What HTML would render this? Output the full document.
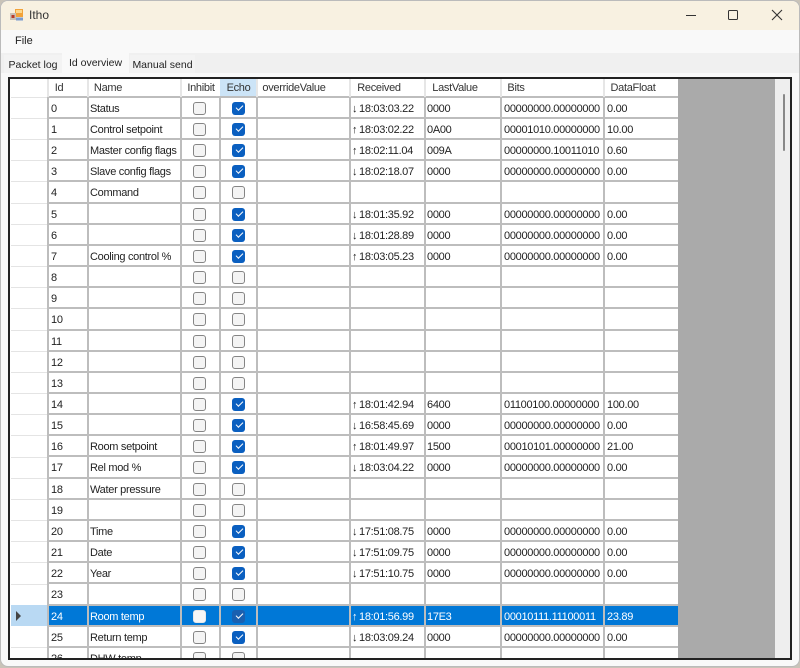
<!DOCTYPE html>
<html><head><meta charset="utf-8"><style>
html,body{margin:0;padding:0;width:800px;height:668px;overflow:hidden;background:#c9c3b8}
body{position:relative;font:11px/21px "Liberation Sans",sans-serif;letter-spacing:-.3px;color:#222}
#w{position:absolute;left:1px;top:1px;width:798px;height:665px;background:#f9f9f9;border-radius:7px;overflow:hidden;box-shadow:0 0 0 1px #bbb}
#t{position:absolute;left:0;top:0;width:798px;height:29px;background:#f8f1e1}
#m{position:absolute;left:0;top:29px;width:798px;height:23px;background:#f9f9f9}
#s{position:absolute;left:0;top:52px;width:798px;height:20px;background:#f0f0f0}
.a{position:absolute}
.tab{position:absolute;font-size:10.5px;letter-spacing:0;line-height:20px;text-align:center;background:#f3f3f3}
#g{position:absolute;left:8px;top:77px;width:784px;height:583px;box-sizing:border-box;border:2px solid #222;background:#aaa;overflow:hidden;filter:blur(.3px)}
#h{position:absolute;left:0;top:0;width:669px;height:18px;background:#fff}
#h b{position:absolute;top:0;font-weight:400;line-height:18px;text-align:center;color:#333;white-space:nowrap}
#d{position:absolute;left:0;top:18.84px;width:669px;background:#fff}
.r{position:relative;height:21.16px;box-sizing:border-box;border-bottom:2px solid #bdbdbd}
.r>*{position:absolute;top:1px;font-style:normal;font-weight:400;white-space:nowrap;line-height:21px}
.r>:nth-child(1){left:41px}.r>:nth-child(2){left:80px}
.r>:nth-child(3){left:183px;top:4px}.r>:nth-child(4){left:222px;top:4px}
.r>:nth-child(5){left:248px}.r>:nth-child(6){left:342px}.r>:nth-child(7){left:417px}.r>:nth-child(8){left:494px}.r>:nth-child(9){left:597px}
.r u{text-decoration:none;font-size:11px;display:inline-block;width:7px;letter-spacing:0}
.c{width:11px;height:11px;border:1.2px solid #858585;border-radius:3px;background:#f4f4f4}
.k{width:13px;height:13px;border:0;background:#0a5fc0}
.k:after{content:"";position:absolute;left:3.5px;top:3px;width:6px;height:3px;border-left:1.2px solid #fff;border-bottom:1.2px solid #fff;transform:rotate(-45deg)}
.sel{background:#0078d7;color:#fff}
.sel .c{background:#f6f6f6;border-color:#e8e8e8}
.sel .k{background:#1a60b0}
.v{position:absolute;top:18px;width:2px;height:563px;background:#bdbdbd}
.hv{position:absolute;top:0;width:2px;height:18px;background:#e6e6e6}
.rh{position:absolute;left:1px;width:36px;height:1px;background:#e4e4e4}
</style></head><body>
<div id="w">
<div id="t">
<svg class="a" style="left:9px;top:8px" width="14" height="13" viewBox="0 0 14 13"><rect x="5" y="0" width="8" height="8" fill="#f2a33a"/><rect x="6" y="1" width="6" height="3" fill="#fbd890"/><rect x="0" y="4" width="6" height="7" fill="#c9c0b5"/><rect x="1.5" y="6" width="3" height="3" fill="#b83a2a"/><rect x="6" y="8.500" width="7" height="3" fill="#7a9cd0"/></svg>
<div class="a" style="left:28px;top:4px;font-size:12px;letter-spacing:0;color:#333">Itho</div>
<div class="a" style="left:685px;top:13.500px;width:10px;height:1px;background:#333"></div>
<div class="a" style="left:727px;top:8.500px;width:8px;height:8px;border:1.2px solid #333;border-radius:1.5px"></div>
<svg class="a" style="left:770px;top:8px" width="12" height="12"><path d="M1 1L11 11M11 1L1 11" stroke="#333" stroke-width="1.1" fill="none"/></svg>
</div>
<div id="m"><div class="a" style="left:14px;top:1px;font-size:11px;letter-spacing:0;color:#222">File</div></div>
<div id="s">
<div class="tab" style="left:3px;top:2px;width:58px;height:18px">Packet log</div>
<div class="tab" style="left:61px;top:0;width:67px;height:20px;background:#f9f9f9">Id overview</div>
<div class="tab" style="left:129px;top:2px;width:65px;height:18px">Manual send</div>
</div>
</div>
<div id="g">
<div id="h">
<b style="left:38px;width:22px">Id</b>
<b style="left:78px;width:40px">Name</b>
<b style="left:172px;width:38px">Inhibit</b>
<b style="left:210px;width:37px;background:#cce4f7">Echo</b>
<b style="left:248px;width:72px">overrideValue</b>
<b style="left:340px;width:58px">Received</b>
<b style="left:415px;width:60px">LastValue</b>
<b style="left:492px;width:28px">Bits</b>
<b style="left:597px;width:52px">DataFloat</b>
</div>
<div id="d">
<div class="r"><b>0</b><b>Status</b><i class="c"></i><i class="c k"></i><b></b><b><u>↓</u>18:03:03.22</b><b>0000</b><b>00000000.00000000</b><b>0.00</b></div>
<div class="r"><b>1</b><b>Control setpoint</b><i class="c"></i><i class="c k"></i><b></b><b><u>↑</u>18:03:02.22</b><b>0A00</b><b>00001010.00000000</b><b>10.00</b></div>
<div class="r"><b>2</b><b>Master config flags</b><i class="c"></i><i class="c k"></i><b></b><b><u>↑</u>18:02:11.04</b><b>009A</b><b>00000000.10011010</b><b>0.60</b></div>
<div class="r"><b>3</b><b>Slave config flags</b><i class="c"></i><i class="c k"></i><b></b><b><u>↓</u>18:02:18.07</b><b>0000</b><b>00000000.00000000</b><b>0.00</b></div>
<div class="r"><b>4</b><b>Command</b><i class="c"></i><i class="c"></i></div>
<div class="r"><b>5</b><b></b><i class="c"></i><i class="c k"></i><b></b><b><u>↓</u>18:01:35.92</b><b>0000</b><b>00000000.00000000</b><b>0.00</b></div>
<div class="r"><b>6</b><b></b><i class="c"></i><i class="c k"></i><b></b><b><u>↓</u>18:01:28.89</b><b>0000</b><b>00000000.00000000</b><b>0.00</b></div>
<div class="r"><b>7</b><b>Cooling control %</b><i class="c"></i><i class="c k"></i><b></b><b><u>↑</u>18:03:05.23</b><b>0000</b><b>00000000.00000000</b><b>0.00</b></div>
<div class="r"><b>8</b><b></b><i class="c"></i><i class="c"></i></div>
<div class="r"><b>9</b><b></b><i class="c"></i><i class="c"></i></div>
<div class="r"><b>10</b><b></b><i class="c"></i><i class="c"></i></div>
<div class="r"><b>11</b><b></b><i class="c"></i><i class="c"></i></div>
<div class="r"><b>12</b><b></b><i class="c"></i><i class="c"></i></div>
<div class="r"><b>13</b><b></b><i class="c"></i><i class="c"></i></div>
<div class="r"><b>14</b><b></b><i class="c"></i><i class="c k"></i><b></b><b><u>↑</u>18:01:42.94</b><b>6400</b><b>01100100.00000000</b><b>100.00</b></div>
<div class="r"><b>15</b><b></b><i class="c"></i><i class="c k"></i><b></b><b><u>↓</u>16:58:45.69</b><b>0000</b><b>00000000.00000000</b><b>0.00</b></div>
<div class="r"><b>16</b><b>Room setpoint</b><i class="c"></i><i class="c k"></i><b></b><b><u>↑</u>18:01:49.97</b><b>1500</b><b>00010101.00000000</b><b>21.00</b></div>
<div class="r"><b>17</b><b>Rel mod %</b><i class="c"></i><i class="c k"></i><b></b><b><u>↓</u>18:03:04.22</b><b>0000</b><b>00000000.00000000</b><b>0.00</b></div>
<div class="r"><b>18</b><b>Water pressure</b><i class="c"></i><i class="c"></i></div>
<div class="r"><b>19</b><b></b><i class="c"></i><i class="c"></i></div>
<div class="r"><b>20</b><b>Time</b><i class="c"></i><i class="c k"></i><b></b><b><u>↓</u>17:51:08.75</b><b>0000</b><b>00000000.00000000</b><b>0.00</b></div>
<div class="r"><b>21</b><b>Date</b><i class="c"></i><i class="c k"></i><b></b><b><u>↓</u>17:51:09.75</b><b>0000</b><b>00000000.00000000</b><b>0.00</b></div>
<div class="r"><b>22</b><b>Year</b><i class="c"></i><i class="c k"></i><b></b><b><u>↓</u>17:51:10.75</b><b>0000</b><b>00000000.00000000</b><b>0.00</b></div>
<div class="r"><b>23</b><b></b><i class="c"></i><i class="c"></i></div>
<div class="r sel"><b>24</b><b>Room temp</b><i class="c"></i><i class="c k"></i><b></b><b><u>↑</u>18:01:56.99</b><b>17E3</b><b>00010111.11100011</b><b>23.89</b></div>
<div class="r"><b>25</b><b>Return temp</b><i class="c"></i><i class="c k"></i><b></b><b><u>↓</u>18:03:09.24</b><b>0000</b><b>00000000.00000000</b><b>0.00</b></div>
<div class="r"><b>26</b><b>DHW temp</b><i class="c"></i><i class="c"></i></div>
</div>
<div class="a" style="left:37px;top:17px;width:631px;height:2px;background:#bdbdbd"></div>
<div class="a" style="left:0;top:0;width:37px;height:581px;background:#fff"></div>
<div class="rh" style="top:18px"></div><div class="rh" style="top:39px"></div><div class="rh" style="top:60px"></div><div class="rh" style="top:81px"></div><div class="rh" style="top:102px"></div><div class="rh" style="top:124px"></div><div class="rh" style="top:145px"></div><div class="rh" style="top:166px"></div><div class="rh" style="top:187px"></div><div class="rh" style="top:208px"></div><div class="rh" style="top:229px"></div><div class="rh" style="top:251px"></div><div class="rh" style="top:272px"></div><div class="rh" style="top:293px"></div><div class="rh" style="top:314px"></div><div class="rh" style="top:335px"></div><div class="rh" style="top:356px"></div><div class="rh" style="top:378px"></div><div class="rh" style="top:399px"></div><div class="rh" style="top:420px"></div><div class="rh" style="top:441px"></div><div class="rh" style="top:462px"></div><div class="rh" style="top:483px"></div><div class="rh" style="top:505px"></div><div class="rh" style="top:568px"></div>
<div class="a" style="left:1px;top:526px;width:36px;height:21px;background:#b9d9f3"></div>
<svg class="a" style="left:5px;top:532px" width="7" height="10"><path d="M1 0L6 5L1 10Z" fill="#444"/></svg>
<div class="v" style="left:36.500px"></div><div class="v" style="left:76.500px"></div><div class="v" style="left:169.500px"></div><div class="v" style="left:208.500px"></div><div class="v" style="left:245.500px"></div><div class="v" style="left:338.500px"></div><div class="v" style="left:413.500px"></div><div class="v" style="left:489.500px"></div><div class="v" style="left:592.500px"></div>
<div class="hv" style="left:36.500px"></div><div class="hv" style="left:76.500px"></div><div class="hv" style="left:169.500px"></div><div class="hv" style="left:245.500px"></div><div class="hv" style="left:338.500px"></div><div class="hv" style="left:413.500px"></div><div class="hv" style="left:489.500px"></div><div class="hv" style="left:592.500px"></div>
<div class="a" style="left:667.500px;top:0;width:98px;height:581px;background:#aaa"></div>
<div class="a" style="left:765px;top:0;width:15px;height:581px;background:#eee"></div>
<div class="a" style="left:772.500px;top:15px;width:2px;height:57px;background:#888;border-radius:1px"></div>
</div>
</body></html>
